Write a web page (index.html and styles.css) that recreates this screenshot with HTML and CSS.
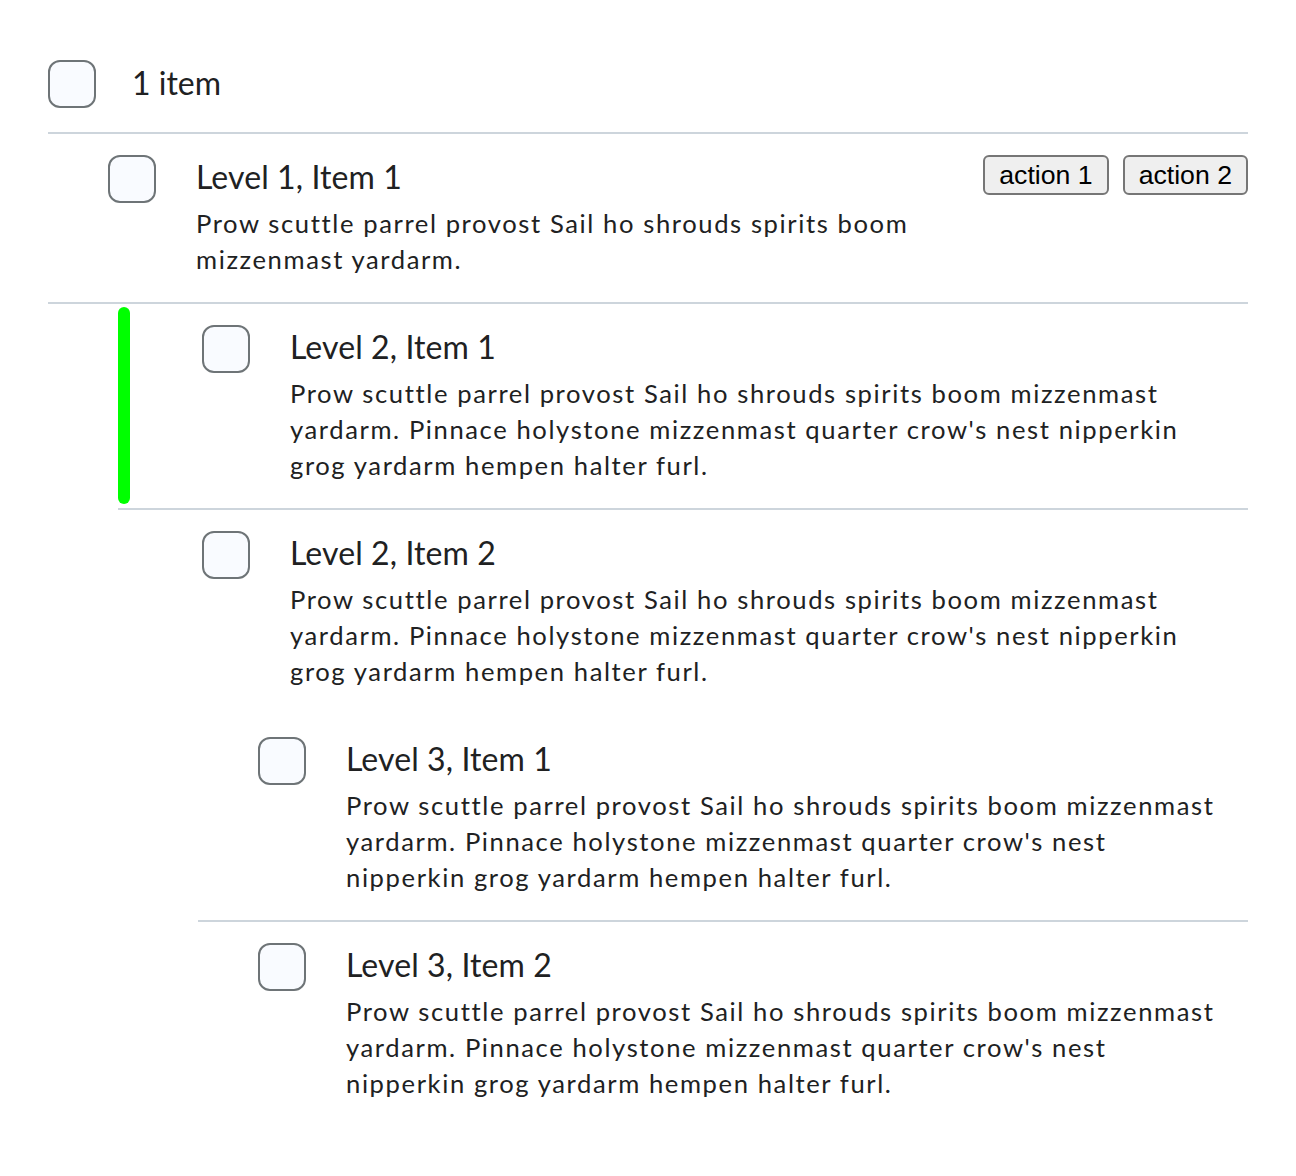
FILE: index.html
```html
<!DOCTYPE html>
<html lang="en">
<head>
<meta charset="utf-8">
<title>List</title>
<link rel="stylesheet" href="styles.css">
</head>
<body>
<div class="list">
  <div class="list-header">
    <span class="checkbox"></span>
    <span class="header-label">1 item</span>
  </div>

  <div class="item item-l1 has-sep">
    <div class="row">
      <span class="checkbox"></span>
      <div class="content">
        <div class="title">Level 1, Item 1</div>
        <div class="desc">Prow scuttle parrel provost Sail ho shrouds spirits boom mizzenmast yardarm.</div>
      </div>
      <div class="actions">
        <button class="btn">action 1</button>
        <button class="btn">action 2</button>
      </div>
    </div>
  </div>

  <div class="nested nested-l2">
    <div class="item item-l2 has-sep">
      <span class="marker"></span>
      <div class="row">
        <span class="checkbox"></span>
        <div class="content">
          <div class="title">Level 2, Item 1</div>
          <div class="desc">Prow scuttle parrel provost Sail ho shrouds spirits boom mizzenmast yardarm. Pinnace holystone mizzenmast quarter crow's nest nipperkin grog yardarm hempen halter furl.</div>
        </div>
      </div>
    </div>

    <div class="item item-l2">
      <div class="row">
        <span class="checkbox"></span>
        <div class="content">
          <div class="title">Level 2, Item 2</div>
          <div class="desc">Prow scuttle parrel provost Sail ho shrouds spirits boom mizzenmast yardarm. Pinnace holystone mizzenmast quarter crow's nest nipperkin grog yardarm hempen halter furl.</div>
        </div>
      </div>

      <div class="nested nested-l3">
        <div class="item item-l3 has-sep">
          <div class="row">
            <span class="checkbox"></span>
            <div class="content">
              <div class="title">Level 3, Item 1</div>
              <div class="desc">Prow scuttle parrel provost Sail ho shrouds spirits boom mizzenmast yardarm. Pinnace holystone mizzenmast quarter crow's nest nipperkin grog yardarm hempen halter furl.</div>
            </div>
          </div>
        </div>
        <div class="item item-l3">
          <div class="row">
            <span class="checkbox"></span>
            <div class="content">
              <div class="title">Level 3, Item 2</div>
              <div class="desc">Prow scuttle parrel provost Sail ho shrouds spirits boom mizzenmast yardarm. Pinnace holystone mizzenmast quarter crow's nest nipperkin grog yardarm hempen halter furl.</div>
            </div>
          </div>
        </div>
      </div>
    </div>
  </div>
</div>
</body>
</html>
```
FILE: styles.css
```css
html, body {
  margin: 0;
  padding: 0;
  background: #ffffff;
}

body {
  font-family: Lato, "Noto Sans", sans-serif;
  color: #202122;
}

.list {
  padding: 60px 48px 40px;
}

.checkbox {
  display: block;
  flex: none;
  width: 48px;
  height: 48px;
  box-sizing: border-box;
  border: 2px solid #6e7477;
  border-radius: 12px;
  background: #f9fbff;
}

.list-header {
  display: flex;
  align-items: flex-start;
  gap: 36px;
  padding-bottom: 24px;
  border-bottom: 2px solid #cdd5dc;
}

.header-label {
  font-size: 32px;
  line-height: 46px;
}

.item {
  position: relative;
}

.item.has-sep {
  border-bottom: 2px solid #cdd5dc;
}

.row {
  display: flex;
  align-items: flex-start;
  gap: 40px;
  padding: 21px 20px 25px 0;
}

.item-l1 > .row {
  padding-left: 60px;
  padding-right: 0;
}

.item-l2 > .row {
  padding-left: 84px;
}

.item-l3 > .row {
  padding-left: 60px;
}

.content {
  flex: 1;
  min-width: 0;
}

.title {
  font-size: 32px;
  line-height: 44px;
  letter-spacing: 0.1px;
}

.desc {
  margin-top: 6px;
  font-size: 25.6px;
  line-height: 36px;
  letter-spacing: 1.6px;
}

.actions {
  flex: none;
  display: flex;
  gap: 14px;
  margin-left: -16px;
}

.btn {
  font-family: "Liberation Sans", Arial, sans-serif;
  font-size: 26.67px;
  line-height: 32px;
  color: #000;
  height: 40px;
  padding: 2px 14px;
  box-sizing: border-box;
  border: 2px solid #767676;
  border-radius: 6px;
  background: #efefef;
}

.nested-l2 {
  margin-left: 70px;
}

.nested-l3 {
  margin-left: 80px;
  padding-top: 2px;
}

.marker {
  position: absolute;
  left: 0;
  top: 3px;
  bottom: 4px;
  width: 12px;
  border-radius: 6px;
  background: #00ff00;
}
```
